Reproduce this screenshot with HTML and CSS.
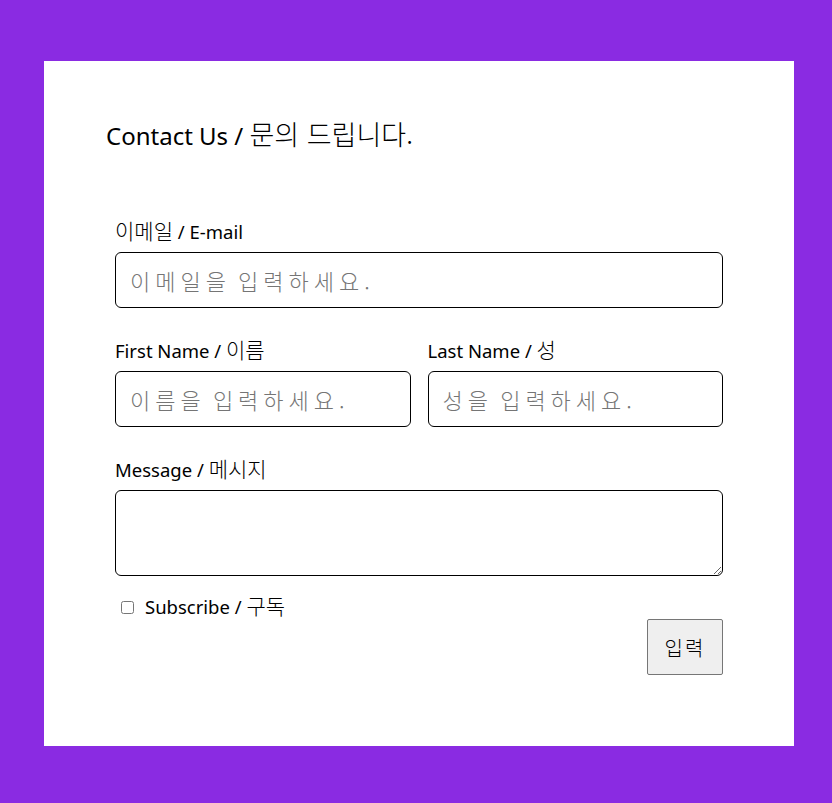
FILE: index.html
```html
<!DOCTYPE html>
<html lang="ko">
<head>
<meta charset="utf-8">
<title>Contact Us</title>
<link rel="stylesheet" href="styles.css">
</head>
<body>
<main class="card">
  <h1 class="title">Contact Us / <span class="ko">문의 드립니다.</span></h1>
  <form class="form">
    <div class="field">
      <label class="label" for="email"><span class="ko">이메일</span> / E-mail</label>
      <input class="input" id="email" type="email" placeholder="이메일을 입력하세요.">
    </div>
    <div class="row">
      <div class="field">
        <label class="label" for="first">First Name / <span class="ko">이름</span></label>
        <input class="input" id="first" type="text" placeholder="이름을 입력하세요.">
      </div>
      <div class="field">
        <label class="label" for="last">Last Name / <span class="ko">성</span></label>
        <input class="input" id="last" type="text" placeholder="성을 입력하세요.">
      </div>
    </div>
    <div class="field">
      <label class="label" for="msg">Message / <span class="ko">메시지</span></label>
      <textarea class="textarea" id="msg"></textarea>
    </div>
    <div class="bottom">
      <label class="check"><input class="checkbox" type="checkbox"><span>Subscribe / <span class="ko">구독</span></span></label>
      <button class="submit" type="submit">입력</button>
    </div>
  </form>
</main>
</body>
</html>
```
FILE: styles.css
```css
html, body {
  margin: 0;
  padding: 0;
}
body {
  background: #8a2be2;
  font-family: "Noto Sans", "Noto Sans CJK KR", sans-serif;
  color: #000;
  padding: 61px 0 57px 44px;
}
.card {
  box-sizing: border-box;
  width: 750px;
  background: #fff;
  padding: 60px 62px 71px 62px;
}
.title {
  margin: 0;
  font-size: 24px;
  line-height: 30px;
  height: 30px;
  font-weight: 400;
}
.title .ko {
  font-size: 27px;
  line-height: 20px;
}
.ko {
  font-family: "Noto Sans CJK KR", sans-serif;
  font-weight: 300;
  font-size: 21px;
  line-height: 16px;
}
.form {
  padding: 69px 9px 0 9px;
  display: flex;
  flex-direction: column;
  gap: 31px;
}
.field {
  display: flex;
  flex-direction: column;
}
.label {
  font-size: 18.5px;
  line-height: 24px;
  height: 24px;
  margin-bottom: 8px;
}
.input {
  box-sizing: border-box;
  width: 100%;
  height: 56px;
  border: 1px solid #000;
  border-radius: 6px;
  padding: 0 14px;
  font-family: "Noto Sans CJK KR", sans-serif;
  font-weight: 300;
  font-size: 22px;
  letter-spacing: 5px;
  word-spacing: -4px;
  background: #fff;
}
.input::placeholder {
  color: #757575;
}
.row {
  display: grid;
  grid-template-columns: 1fr 1fr;
  column-gap: 17px;
}
.textarea {
  display: block;
  box-sizing: border-box;
  width: 100%;
  height: 86px;
  border: 1px solid #000;
  border-radius: 6px;
  margin: 0;
}
.bottom {
  display: flex;
  flex-direction: column;
  margin-top: -12px;
}
.check {
  font-size: 18.5px;
  line-height: 24px;
  height: 24px;
  display: flex;
  align-items: center;
  gap: 11px;
}
.checkbox {
  width: 13px;
  height: 13px;
  margin: 0 0 0 6px;
}
.submit {
  align-self: flex-end;
  width: 76px;
  height: 56px;
  background: #efefef;
  border: 1px solid #767676;
  border-radius: 2px;
  font-family: "Noto Sans CJK KR", sans-serif;
  font-weight: 300;
  font-size: 20px;
  letter-spacing: 2px;
  color: #000;
  padding: 0;
}
```
